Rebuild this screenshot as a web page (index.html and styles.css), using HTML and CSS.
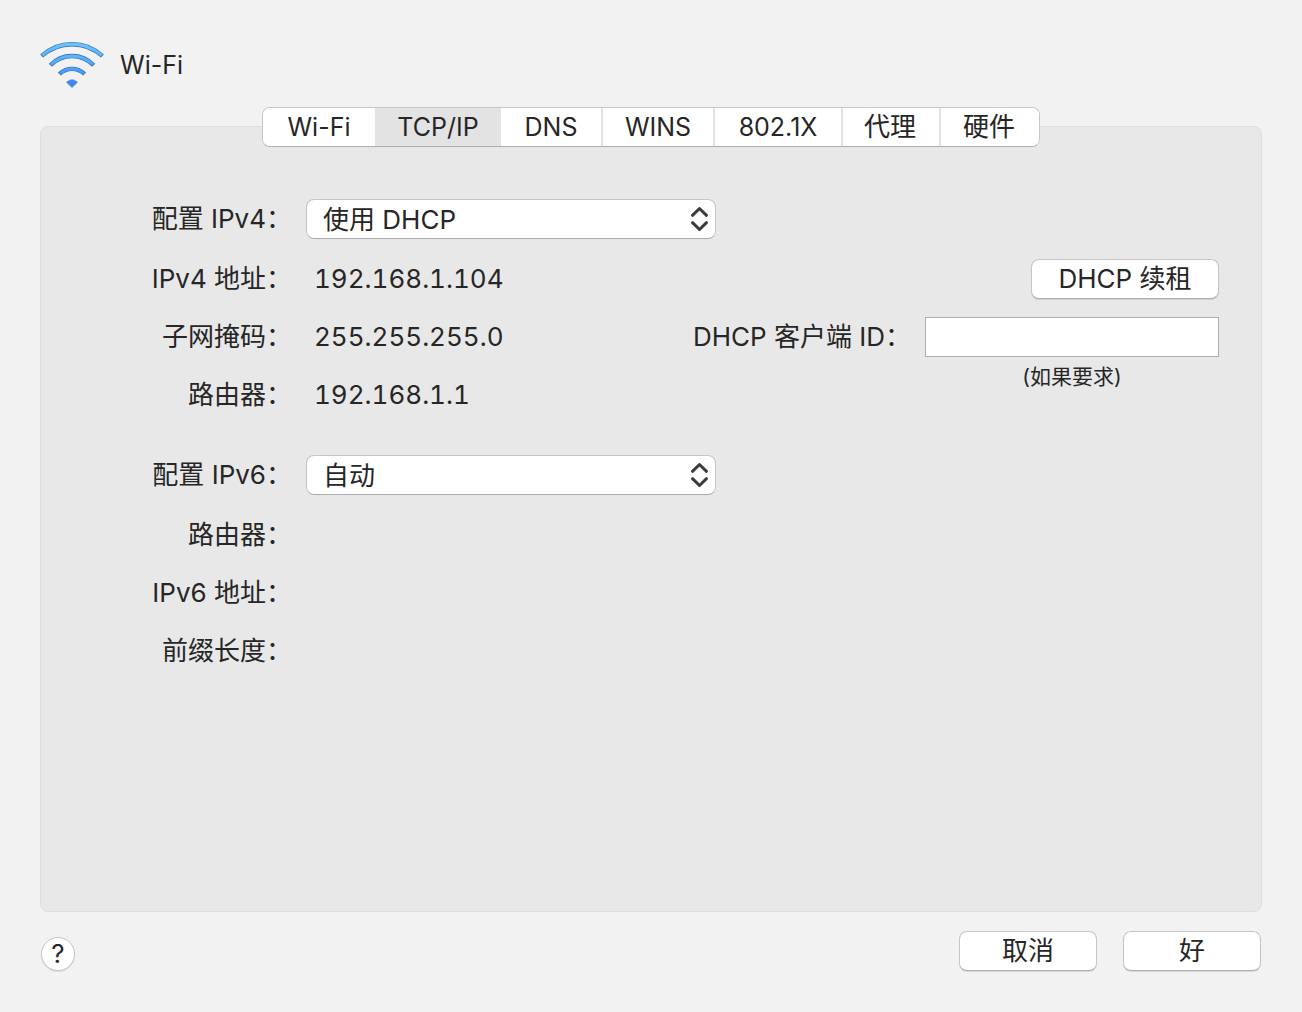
FILE: index.html
```html
<!DOCTYPE html>
<html lang="zh-CN">
<head>
<meta charset="utf-8">
<meta name="viewport" content="width=device-width, initial-scale=1">
<title>Wi-Fi</title>
<link rel="stylesheet" href="styles.css">
</head>
<body>
<header class="header">
  <svg class="wifi-icon" width="64" height="48" viewBox="0 0 64 48" aria-hidden="true">
    <defs>
      <linearGradient id="wave" gradientUnits="userSpaceOnUse" x1="0" y1="2" x2="0" y2="48">
        <stop offset="0" stop-color="#6cc4fb"/>
        <stop offset="1" stop-color="#3583f6"/>
      </linearGradient>
    </defs>
    <g fill="none" stroke="#2f6db0" stroke-width="4.400">
      <path d="M1.600 15A45 45 0 0 1 62.400 15"/>
      <path d="M10.400 24.200A30 30 0 0 1 53.600 24.200"/>
      <path d="M19.400 33A18 18 0 0 1 44.600 33"/>
    </g>
    <g fill="none" stroke="url(#wave)" stroke-width="3.200">
      <path d="M2.100 14.500A45 45 0 0 1 61.900 14.500"/>
      <path d="M10.900 23.700A30 30 0 0 1 53.100 23.700"/>
      <path d="M19.900 32.500A18 18 0 0 1 44.100 32.500"/>
    </g>
    <path d="M26.600 41.200Q32 36.200 37.400 41.200L32 46.500Z" fill="#3a8af8" stroke="#3474c8" stroke-width=".6"/>
  </svg>
  <h1 class="title">Wi-Fi</h1>
</header>

<main class="panel">
  <div class="tabs" role="tablist">
    <button class="tab tab-wifi" type="button" role="tab" aria-selected="false">Wi-Fi</button>
    <button class="tab tab-tcp" type="button" role="tab" aria-selected="true">TCP/IP</button>
    <button class="tab tab-dns" type="button" role="tab" aria-selected="false">DNS</button>
    <button class="tab tab-wins" type="button" role="tab" aria-selected="false">WINS</button>
    <button class="tab tab-dot1x" type="button" role="tab" aria-selected="false">802.1X</button>
    <button class="tab tab-han" type="button" role="tab" aria-selected="false">代理</button>
    <button class="tab tab-han" type="button" role="tab" aria-selected="false">硬件</button>
  </div>

  <form class="settings">
    <section class="group">
      <div class="row row-select">
        <label class="label" for="ipv4-mode">配置 IPv4：</label>
        <div class="popup">
          <select class="select" id="ipv4-mode"><option>使用 DHCP</option></select>
          <svg class="chevrons" width="18" height="26" viewBox="0 0 18 26" aria-hidden="true"><path d="M2.500 9.300L9.500 2.500L16.500 9.300M2.500 16.700L9.500 23.500L16.500 16.700"/></svg>
        </div>
      </div>
      <div class="row">
        <span class="label">IPv4 地址：</span>
        <output class="value">192.168.1.104</output>
        <button class="button button-renew" type="button">DHCP 续租</button>
      </div>
      <div class="row">
        <span class="label">子网掩码：</span>
        <output class="value">255.255.255.0</output>
        <div class="client">
          <label class="client-label" for="client-id">DHCP 客户端 ID：</label>
          <div class="client-field">
            <input class="input" id="client-id" type="text" aria-describedby="client-hint">
            <span class="hint" id="client-hint">(如果要求)</span>
          </div>
        </div>
      </div>
      <div class="row">
        <span class="label">路由器：</span>
        <output class="value">192.168.1.1</output>
      </div>
    </section>
    <section class="group">
      <div class="row row-select">
        <label class="label" for="ipv6-mode">配置 IPv6：</label>
        <div class="popup">
          <select class="select" id="ipv6-mode"><option>自动</option></select>
          <svg class="chevrons" width="18" height="26" viewBox="0 0 18 26" aria-hidden="true"><path d="M2.500 9.300L9.500 2.500L16.500 9.300M2.500 16.700L9.500 23.500L16.500 16.700"/></svg>
        </div>
      </div>
      <div class="row"><span class="label">路由器：</span></div>
      <div class="row"><span class="label">IPv6 地址：</span></div>
      <div class="row"><span class="label">前缀长度：</span></div>
    </section>
  </form>
</main>

<footer class="footer">
  <button class="help" type="button">?</button>
  <div class="actions">
    <button class="button" type="button">取消</button>
    <button class="button" type="button">好</button>
  </div>
</footer>
</body>
</html>
```
FILE: styles.css
```css
* {
  box-sizing: border-box;
}

body {
  display: flex;
  flex-direction: column;
  min-height: 100vh;
  margin: 0;
  padding: 41px 40px;
  background: #f2f2f2;
  color: #262626;
  font: 26px/40px Inter, "Noto Sans CJK SC", sans-serif;
}

button,
input,
select {
  margin: 0;
  color: inherit;
  font: inherit;
}

.header {
  display: flex;
  align-items: center;
  gap: 16px;
  height: 48px;
}

.title {
  margin: 0;
  font-size: 25px;
  font-weight: 400;
}

.panel {
  display: flex;
  flex: 1;
  flex-direction: column;
  margin-top: 37px;
  border: 1px solid #dedede;
  border-radius: 8px;
  background: #e8e8e8;
}

.tabs {
  display: flex;
  align-self: center;
  height: 40px;
  margin-top: -20px;
  overflow: hidden;
  border: 1px solid #c6c6c6;
  border-bottom-color: #adadad;
  border-radius: 8px;
  background: #fff;
}

.tab {
  padding: 0;
  border: 0;
  border-right: 2px solid #e3e3e3;
  background: #fff;
  font-size: 25px;
  line-height: 38px;
}

.tab-wifi {
  width: 112px;
  border-right: 0;
}

.tab-tcp {
  width: 126px;
  border-right: 0;
}

.tab-dns {
  width: 102px;
}

.tab-wins {
  width: 112px;
}

.tab-dot1x {
  width: 128px;
}

.tab-han {
  width: 98px;
  padding-right: 2px;
  font-size: 26px;
}

.tab:last-child {
  border-right: 0;
}

.tab[aria-selected="true"] {
  background: #e3e3e3;
}

.settings {
  display: flex;
  flex-direction: column;
  gap: 40px;
  padding: 52px 42px 42px 104px;
}

.group {
  display: flex;
  flex-direction: column;
  gap: 18px;
}

.row {
  display: flex;
  align-items: flex-start;
  gap: 14px;
  height: 40px;
}

.row-select {
  margin-bottom: 2px;
}

.label {
  width: 147px;
  text-align: right;
  white-space: nowrap;
}

.value {
  padding-left: 8px;
  font-variant-numeric: tabular-nums;
}

.popup {
  position: relative;
}

.select {
  display: block;
  width: 410px;
  height: 40px;
  padding: 0 40px 2px 16px;
  border: 1px solid #c6c6c6;
  border-bottom-color: #adadad;
  border-radius: 8px;
  appearance: none;
  background: #fff;
}

.chevrons {
  position: absolute;
  top: 7px;
  right: 8px;
  fill: none;
  stroke: #3c3c3c;
  stroke-width: 3;
  stroke-linecap: round;
  stroke-linejoin: round;
  overflow: visible;
  pointer-events: none;
}

.button {
  width: 138px;
  height: 40px;
  padding: 0;
  border: 1px solid #c6c6c6;
  border-bottom-color: #adadad;
  border-radius: 8px;
  background: #fff;
  box-shadow: 0 1px 1px #0000001a;
  line-height: 38px;
}

.button-renew {
  width: 188px;
  margin-left: auto;
}

.client {
  display: flex;
  gap: 14px;
  margin-left: auto;
}

.client-label {
  white-space: nowrap;
}

.client-field {
  display: flex;
  flex-direction: column;
  gap: 8px;
  width: 294px;
}

.input {
  width: 100%;
  height: 40px;
  padding: 0 8px;
  border: 1px solid #adadad;
  border-radius: 0;
  background: #fff;
}

.hint {
  font-size: 21px;
  line-height: 24px;
  text-align: center;
}

.footer {
  display: flex;
  align-items: flex-end;
  justify-content: space-between;
  margin-top: 19px;
}

.help {
  width: 34px;
  height: 34px;
  margin-left: 1px;
  padding: 0;
  border: 1px solid #c6c6c6;
  border-radius: 50%;
  background: #fff;
  box-shadow: 0 1px 1px #0000001a;
  line-height: 32px;
}

.actions {
  display: flex;
  gap: 26px;
  margin-right: 1px;
}
```
